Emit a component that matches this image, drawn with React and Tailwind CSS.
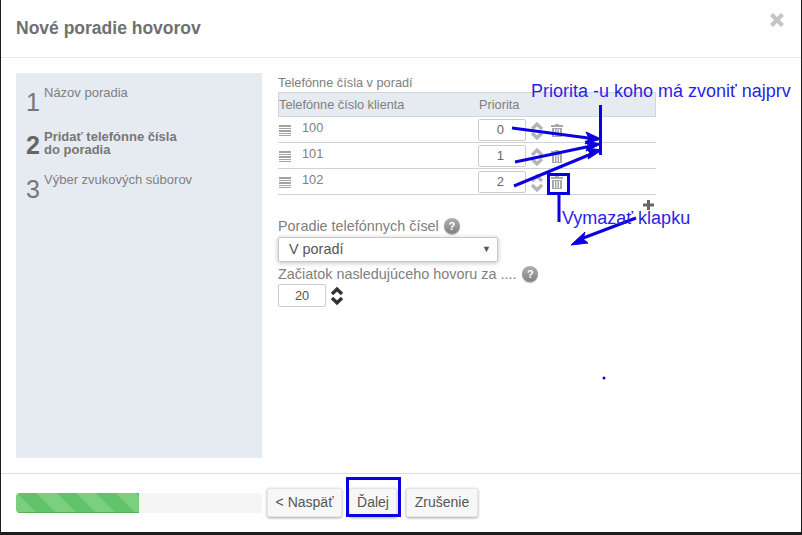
const ROWS = [
    { phone: '100', priority: '0' },
    { phone: '101', priority: '1' },
    { phone: '102', priority: '2' },
];

function HelpDot() {
    return (
        <span className="inline-flex h-[16px] w-[16px] items-center justify-center rounded-full bg-gradient-to-b from-[#b0b0b0] to-[#808080] text-[11px] font-bold leading-none text-white shadow-[0_1px_1px_rgba(0,0,0,0.3)]">
            ?
        </span>
    );
}

function Spinner({ dark }) {
    const color = dark ? '#333333' : '#b5b5b5';
    return (
        <svg width="14" height="20" viewBox="0 0 14 20" fill="none" stroke={color} strokeWidth="3.4">
            <path d="M2 8 L7 3.2 L12 8" />
            <path d="M2 12 L7 16.8 L12 12" />
        </svg>
    );
}

function DragHandle() {
    return (
        <svg width="13" height="11" viewBox="0 0 13 11" fill="#a3a3a3">
            <rect x="0" y="0" width="12" height="2" />
            <rect x="0" y="3" width="12" height="1" />
            <rect x="0" y="5" width="12" height="2" />
            <rect x="0" y="8" width="12" height="1" />
            <rect x="0" y="10" width="12" height="1" />
        </svg>
    );
}

function TrashIcon() {
    return (
        <svg width="12" height="13" viewBox="0 0 12 13" fill="#a8a8a8">
            <rect x="4" y="0" width="4" height="1" />
            <rect x="0" y="1" width="12" height="2" />
            <path d="M1 4 H11 V13 H1 Z M3 5 V12 H4 V5 Z M5.5 5 V12 H6.5 V5 Z M8 5 V12 H9 V5 Z" fillRule="evenodd" />
        </svg>
    );
}

function Step({ num, active, children, className }) {
    return (
        <div className={`flex ${className}`}>
            <span className={`w-[18px] text-center text-[25px] leading-none ${active ? 'mt-[3px] font-bold text-[#666]' : 'mt-[4px] text-[#777]'}`}>
                {num}
            </span>
            <span className={`ml-[2px] text-[13px] leading-[13px] ${active ? 'font-bold text-[#777]' : 'text-[#808080]'}`}>
                {children}
            </span>
        </div>
    );
}

export default function App() {
    return (
        <div className="relative h-[535px] w-[802px] overflow-hidden bg-[#1c1c1c] font-['Liberation_Sans',Arial,sans-serif]">
            <div className="ml-px flex h-[532px] w-[800px] flex-col bg-white">
                {/* Header */}
                <div className="flex h-[58px] shrink-0 items-center justify-between border-b border-[#e9e9e9] pl-[15px] pr-[17px]">
                    <h1 className="text-[17.5px] font-bold text-[#707070]">Nové poradie hovorov</h1>
                    <svg className="mb-[18px]" width="14" height="14" viewBox="0 0 14 14" stroke="#c4c4c4" strokeWidth="4">
                        <path d="M1.5 1.5 L12.5 12.5 M12.5 1.5 L1.5 12.5" />
                    </svg>
                </div>

                {/* Body */}
                <div className="flex h-[416px] shrink-0 border-b border-[#dddddd] pl-[15px] pt-[15px]">
                    <div className="h-[385px] w-[246px] shrink-0 bg-[#e5ebf1] pl-[8px] pt-[13px]">
                        <Step num="1">Názov poradia</Step>
                        <Step num="2" active className="mt-[15px]">
                            Pridať telefónne čísla
                            <br />
                            do poradia
                        </Step>
                        <Step num="3" className="mt-[15px]">Výber zvukových súborov</Step>
                    </div>

                    <div className="ml-[16px] w-[378px] text-[#808080]">
                        <div className="mb-[2px] mt-[3px] text-[12.75px] leading-[14px]">Telefónne čísla v poradí</div>
                        <div className="flex h-[25px] items-center border border-[#cfd6dc] bg-[#e5ebf1] text-[12.75px]">
                            <span className="w-[200px]">Telefónne číslo klienta</span>
                            <span>Priorita</span>
                        </div>
                        {ROWS.map((row) => (
                            <div key={row.phone} className="flex h-[26px] border-b border-[#ccd3d9]">
                                <div className="ml-px mt-[8px] w-[23px]">
                                    <DragHandle />
                                </div>
                                <span className="mt-[3px] w-[176px] text-[12.75px] leading-[16px]">{row.phone}</span>
                                <div className="mt-[2px] flex h-[22px] w-[48px] items-center justify-end rounded-[2px] border border-[#cccccc] bg-white pr-[21px] text-[13px] text-[#666]">
                                    {row.priority}
                                </div>
                                <div className="ml-[4px] mt-[4px]">
                                    <Spinner />
                                </div>
                                <div className="ml-[7px] mt-[7px]">
                                    <TrashIcon />
                                </div>
                            </div>
                        ))}

                        <div className="mt-[22px] flex items-center gap-[5px] text-[14.4px] leading-[18px]">
                            Poradie telefónnych čísel <HelpDot />
                        </div>
                        <div className="mt-[2px] flex h-[25px] w-[220px] items-center justify-between rounded-[2px] border border-[#c8c8c8] bg-white pl-[10px] pr-[6px] text-[14.4px] text-[#555] shadow-[0_1px_5px_rgba(0,0,0,0.25)]">
                            V poradí
                            <span className="text-[9px] text-[#555]">▼</span>
                        </div>
                        <div className="mt-[3px] flex items-center gap-[6px] text-[14.4px] leading-[18px]">
                            Začiatok nasledujúceho hovoru za .... <HelpDot />
                        </div>
                        <div className="mt-[1px] flex items-center">
                            <div className="flex h-[23px] w-[48px] items-center justify-center rounded-[2px] border border-[#cccccc] bg-white text-[12.75px] text-[#555]">
                                20
                            </div>
                            <div className="ml-[4px]">
                                <Spinner dark />
                            </div>
                        </div>
                    </div>
                </div>

                {/* Footer */}
                <div className="flex items-start pl-[15px] pt-[14px]">
                    <div className="mt-[5px] flex h-[20px] w-[246px] overflow-hidden rounded-[4px] bg-[#f5f5f5]">
                        <div className="h-full w-[123px] border-b border-[#55b055] bg-[repeating-linear-gradient(45deg,#7bcf7f_0,#7bcf7f_14px,#62c46a_14px,#62c46a_28px)]" />
                    </div>
                    <div className="ml-[5px] flex h-[29px] w-[75px] items-center justify-center rounded-[2px] border border-[#e4e4e4] bg-[#f7f7f7] text-[14px] text-[#555] shadow-[0_1px_3px_rgba(0,0,0,0.35)]">
                        &lt; Naspäť
                    </div>
                    <div className="ml-[7px] flex h-[29px] w-[48px] items-center justify-center rounded-[2px] border border-[#e4e4e4] bg-[#f7f7f7] text-[14px] text-[#555] shadow-[0_1px_3px_rgba(0,0,0,0.35)]">
                        Ďalej
                    </div>
                    <div className="ml-[9px] flex h-[29px] w-[72px] items-center justify-center rounded-[2px] border border-[#e4e4e4] bg-[#f7f7f7] text-[14px] text-[#555] shadow-[0_1px_3px_rgba(0,0,0,0.35)]">
                        Zrušenie
                    </div>
                </div>
            </div>

            {/* Annotations drawn over the screenshot */}
            <svg className="absolute left-0 top-0" width="802" height="535" viewBox="0 0 802 535" fill="none" stroke="#0b00e0">
                <path d="M600.5 105 V155" strokeWidth="3" />
                <path d="M512 128 L596 139" strokeWidth="3" />
                <path d="M515 162 L596 145" strokeWidth="3" />
                <path d="M514 186 L596 152" strokeWidth="3" />
                <path d="M601 139 L586 132 L589 138 L585 144 Z" fill="#0b00e0" strokeWidth="1" />
                <path d="M601 144 L585 141 L589 146 L586 151 Z" fill="#0b00e0" strokeWidth="1" />
                <path d="M602 150 L586 148 L590 153 L588 159 Z" fill="#0b00e0" strokeWidth="1" />
                <rect x="548.5" y="174.5" width="20" height="19" strokeWidth="3" />
                <path d="M559 195 V222" strokeWidth="3" />
                <path d="M636 218 L578 240" strokeWidth="3" />
                <path d="M571 245 L585 232 L583 239 L588 243 Z" fill="#0b00e0" strokeWidth="1" />
                <rect x="347.5" y="478.5" width="52" height="37" strokeWidth="3" />
                <circle cx="604" cy="378" r="1.5" fill="#0b00e0" strokeWidth="0" />
                <path d="M643 205 H654 M648.5 200 V210" stroke="#666666" strokeWidth="3" />
            </svg>
            <span className="absolute left-[531px] top-[81px] text-[18px] leading-[20px] text-[#2a1fe6]">
                Priorita -u koho má zvoniť najprv
            </span>
            <span className="absolute left-[562px] top-[208px] text-[18px] leading-[20px] text-[#2a1fe6]">
                Vymazať klapku
            </span>
        </div>
    );
}
